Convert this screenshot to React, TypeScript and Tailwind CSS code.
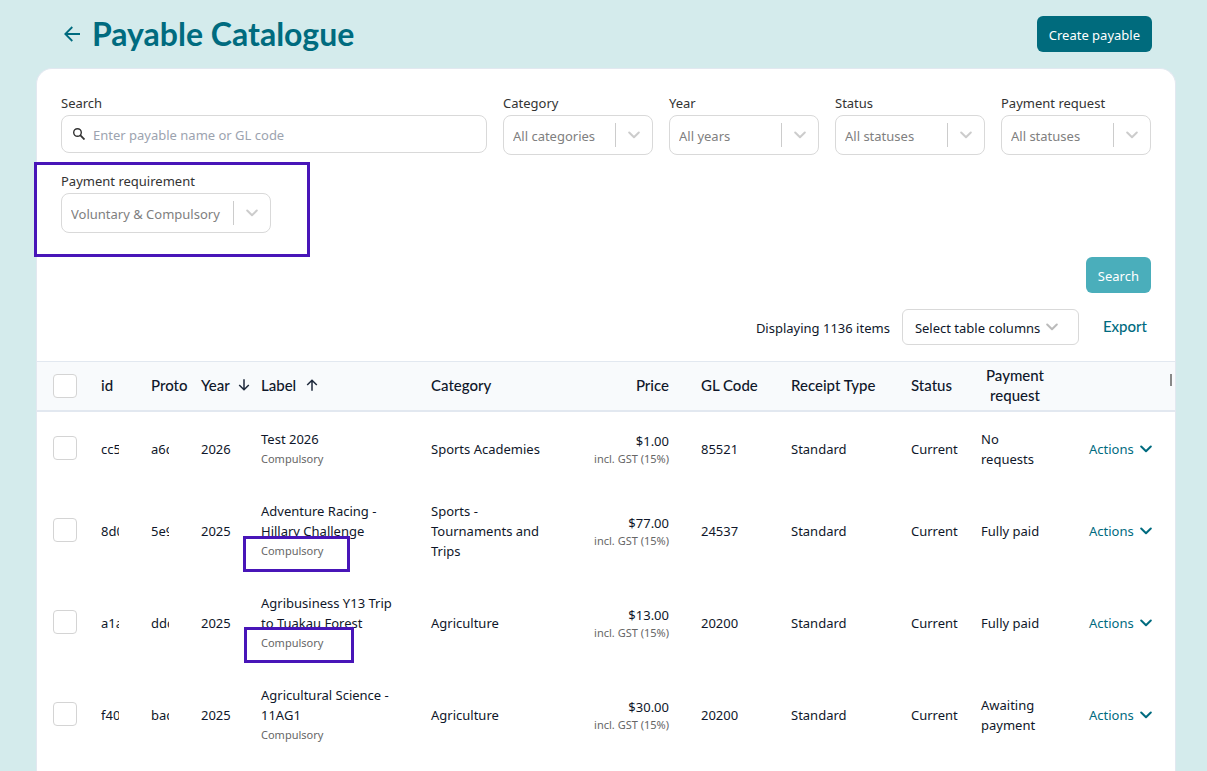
import type { ReactNode } from "react";

type Payable = {
  id: string;
  proto: string;
  year: string;
  label: string;
  category: string;
  price: string;
  glCode: string;
  request: string;
};

const payables: Payable[] = [
  { id: "cc5e1", proto: "a6c41", year: "2026", label: "Test 2026", category: "Sports Academies", price: "$1.00", glCode: "85521", request: "No requests" },
  { id: "8d0b2", proto: "5e9a7", year: "2025", label: "Adventure Racing - Hillary Challenge", category: "Sports - Tournaments and Trips", price: "$77.00", glCode: "24537", request: "Fully paid" },
  { id: "a1a93", proto: "ddc18", year: "2025", label: "Agribusiness Y13 Trip to Tuakau Forest", category: "Agriculture", price: "$13.00", glCode: "20200", request: "Fully paid" },
  { id: "f40d6", proto: "bac52", year: "2025", label: "Agricultural Science - 11AG1", category: "Agriculture", price: "$30.00", glCode: "20200", request: "Awaiting payment" },
];

function Chevron({ className }: { className: string }) {
  return (
    <svg viewBox="0 0 12 8" fill="none" stroke="currentColor" strokeWidth="2" strokeLinecap="round" strokeLinejoin="round" className={className} aria-hidden="true">
      <path d="M1.2 1.5 6 6.2l4.8-4.7" />
    </svg>
  );
}

function SortArrow({ className = "" }: { className?: string }) {
  return (
    <svg viewBox="0 0 12 12" fill="none" stroke="#1e293b" strokeWidth="1.5" className={`size-3 shrink-0 ${className}`} aria-hidden="true">
      <path d="M6 11.8V1.2M1.2 6 6 1.2 10.8 6" />
    </svg>
  );
}

function SelectField({ id, label, value, width }: { id: string; label: string; value: string; width: string }) {
  return (
    <div className={width}>
      <label htmlFor={id} className="mb-0.5 block text-[#333333]">{label}</label>
      <div className="relative">
        <select id={id} className="block h-10 w-full appearance-none rounded-lg border border-[#d9d9d9] bg-white pt-0.5 pl-[9px] text-[#808080]">
          <option>{value}</option>
        </select>
        <div className="pointer-events-none absolute inset-y-2 right-0 flex w-[38px] items-center justify-center border-l border-[#cccccc] pr-0.5 text-[#cccccc]">
          <Chevron className="h-2 w-3" />
        </div>
      </div>
    </div>
  );
}

function Checkbox({ label }: { label: string }) {
  return <input type="checkbox" aria-label={label} className="block size-6 appearance-none rounded border border-[#d4d4d4] bg-white" />;
}

function HeaderCell({ children, className = "" }: { children?: ReactNode; className?: string }) {
  return <th scope="col" className={`px-4 pb-0.5 font-medium whitespace-nowrap ${className}`}>{children}</th>;
}

function PayableRow({ payable }: { payable: Payable }) {
  return (
    <tr>
      <td className="py-4 pl-4"><Checkbox label={`Select ${payable.label}`} /></td>
      <td className="px-4 pt-0.5"><div className="overflow-hidden">{payable.id}</div></td>
      <td className="px-4 pt-0.5"><div className="overflow-hidden">{payable.proto}</div></td>
      <td className="px-4 pt-0.5 whitespace-nowrap">{payable.year}</td>
      <td className="pt-[17px] pb-[15px] pl-4">
        <div className="w-[140px]">{payable.label}</div>
        <div className="text-[11px] leading-5 text-[#666666]">Compulsory</div>
      </td>
      <td className="pt-[17px] pb-[15px] pl-4"><div className="w-[120px]">{payable.category}</div></td>
      <td className="pt-0.5 pr-4 text-right whitespace-nowrap">
        <div>{payable.price}</div>
        <div className="text-[11px] leading-4 text-[#666666]">incl. GST (15%)</div>
      </td>
      <td className="px-4 pt-0.5">{payable.glCode}</td>
      <td className="px-4 pt-0.5">Standard</td>
      <td className="pt-0.5 pl-4 whitespace-nowrap">Current</td>
      <td className="px-4 pt-0.5">{payable.request}</td>
      <td className="pt-0.5 pl-6">
        <button type="button" className="flex items-center gap-1.5 text-[#006b7f]">
          Actions
          <Chevron className="h-2 w-3" />
        </button>
      </td>
    </tr>
  );
}

export default function App() {
  return (
    <div className="relative flex min-h-screen flex-col bg-[#d4ebec] pr-[31px] pl-9 font-['Noto_Sans',sans-serif] text-[13px] leading-5 text-[#0f172a]">
      <header className="flex items-center justify-between py-4 pr-6 pl-7">
        <div className="flex items-center gap-3">
          <a href="#back" aria-label="Back" className="text-[#006b7f]">
            <svg viewBox="0 0 16 16" fill="none" stroke="currentColor" strokeWidth="1.8" className="size-4" aria-hidden="true">
              <path d="M16 8H1.5M8.3 1 1.3 8l7 7" />
            </svg>
          </a>
          <h1 className="font-['Lato',sans-serif] text-[32px] leading-9 font-bold text-[#006b7f]">Payable Catalogue</h1>
        </div>
        <button type="button" className="h-9 rounded-md bg-[#006b7d] px-3 pt-0.5 text-white">Create payable</button>
      </header>

      <main className="flex-1 rounded-t-2xl border border-b-0 border-slate-200 bg-white">
        <div className="flex flex-wrap gap-4 px-6 pt-6">
          <div className="min-w-[300px] flex-1">
            <label htmlFor="search" className="mb-0.5 block text-[#333333]">Search</label>
            <div className="flex h-[38px] items-center gap-2 rounded-lg border border-[#d9d9d9] px-[11px]">
              <svg viewBox="0 0 12 12" fill="none" stroke="#333333" strokeWidth="1.4" className="size-3 shrink-0" aria-hidden="true">
                <circle cx="4.5" cy="4.5" r="3.8" />
                <path d="m7.2 7.2 4.3 4.3" strokeWidth="1.8" />
              </svg>
              <input id="search" type="text" placeholder="Enter payable name or GL code" className="w-full pt-0.5 outline-none placeholder:text-[#9ca3af]" />
            </div>
          </div>
          <SelectField id="category" label="Category" value="All categories" width="w-[150px]" />
          <SelectField id="year" label="Year" value="All years" width="w-[150px]" />
          <SelectField id="status" label="Status" value="All statuses" width="w-[150px]" />
          <SelectField id="request" label="Payment request" value="All statuses" width="w-[150px]" />
          <div className="w-full">
            <SelectField id="requirement" label="Payment requirement" value="Voluntary & Compulsory" width="w-[210px]" />
          </div>
        </div>

        <div className="flex justify-end px-6 pt-6">
          <button type="button" className="h-9 rounded-md bg-[#4aaebb] px-3 pt-0.5 text-white">Search</button>
        </div>

        <div className="flex items-center justify-end gap-3 px-6 py-4">
          <span className="pt-0.5">Displaying 1136 items</span>
          <button type="button" className="flex h-9 w-[177px] items-center gap-1.5 rounded-md border border-[#d9d9d9] px-3 whitespace-nowrap">
            <span className="pt-0.5">Select table columns</span>
            <Chevron className="h-2 w-3 text-[#bbbbbb]" />
          </button>
          <button type="button" className="pr-1 pb-0.5 pl-3 font-['Lato',sans-serif] text-[15px] font-medium text-[#006b7f]">Export</button>
        </div>

        <table className="w-full table-fixed text-left">
          <colgroup>
            <col className="w-12" />
            <col className="w-[50px]" />
            <col className="w-[50px]" />
            <col className="w-[60px]" />
            <col className="w-[170px]" />
            <col className="w-[150px]" />
            <col className="w-[120px]" />
            <col className="w-[90px]" />
            <col className="w-[120px]" />
            <col className="w-[70px]" />
            <col className="w-[100px]" />
            <col />
          </colgroup>
          <thead className="border-t border-b-2 border-slate-200 bg-slate-50 font-['Lato',sans-serif] text-[15px] leading-5">
            <tr className="h-[49px]">
              <th className="pl-4"><Checkbox label="Select all" /></th>
              <HeaderCell>id</HeaderCell>
              <HeaderCell>Proto</HeaderCell>
              <HeaderCell><span className="flex items-center gap-2">Year <SortArrow className="rotate-180" /></span></HeaderCell>
              <HeaderCell><span className="flex items-center gap-2.5">Label <SortArrow /></span></HeaderCell>
              <HeaderCell>Category</HeaderCell>
              <HeaderCell className="text-right">Price</HeaderCell>
              <HeaderCell>GL Code</HeaderCell>
              <HeaderCell>Receipt Type</HeaderCell>
              <HeaderCell>Status</HeaderCell>
              <th scope="col" className="px-4 pb-0.5 text-center font-medium">Payment request</th>
              <td className="pr-[3px] pb-3"><div className="ml-auto h-3 w-0.5 bg-[#888888]" /></td>
            </tr>
          </thead>
          <tbody>
            {payables.map((payable) => (
              <PayableRow key={payable.id} payable={payable} />
            ))}
          </tbody>
        </table>
      </main>

      {/* highlight boxes */}
      <div className="pointer-events-none absolute top-[162px] left-[34px] h-[95px] w-[276px] border-3 border-[#4815b8]" />
      <div className="pointer-events-none absolute top-[536px] left-[243px] h-9 w-[107px] border-3 border-[#4815b8]" />
      <div className="pointer-events-none absolute top-[627px] left-[244px] h-9 w-[110px] border-3 border-[#4815b8]" />
    </div>
  );
}
